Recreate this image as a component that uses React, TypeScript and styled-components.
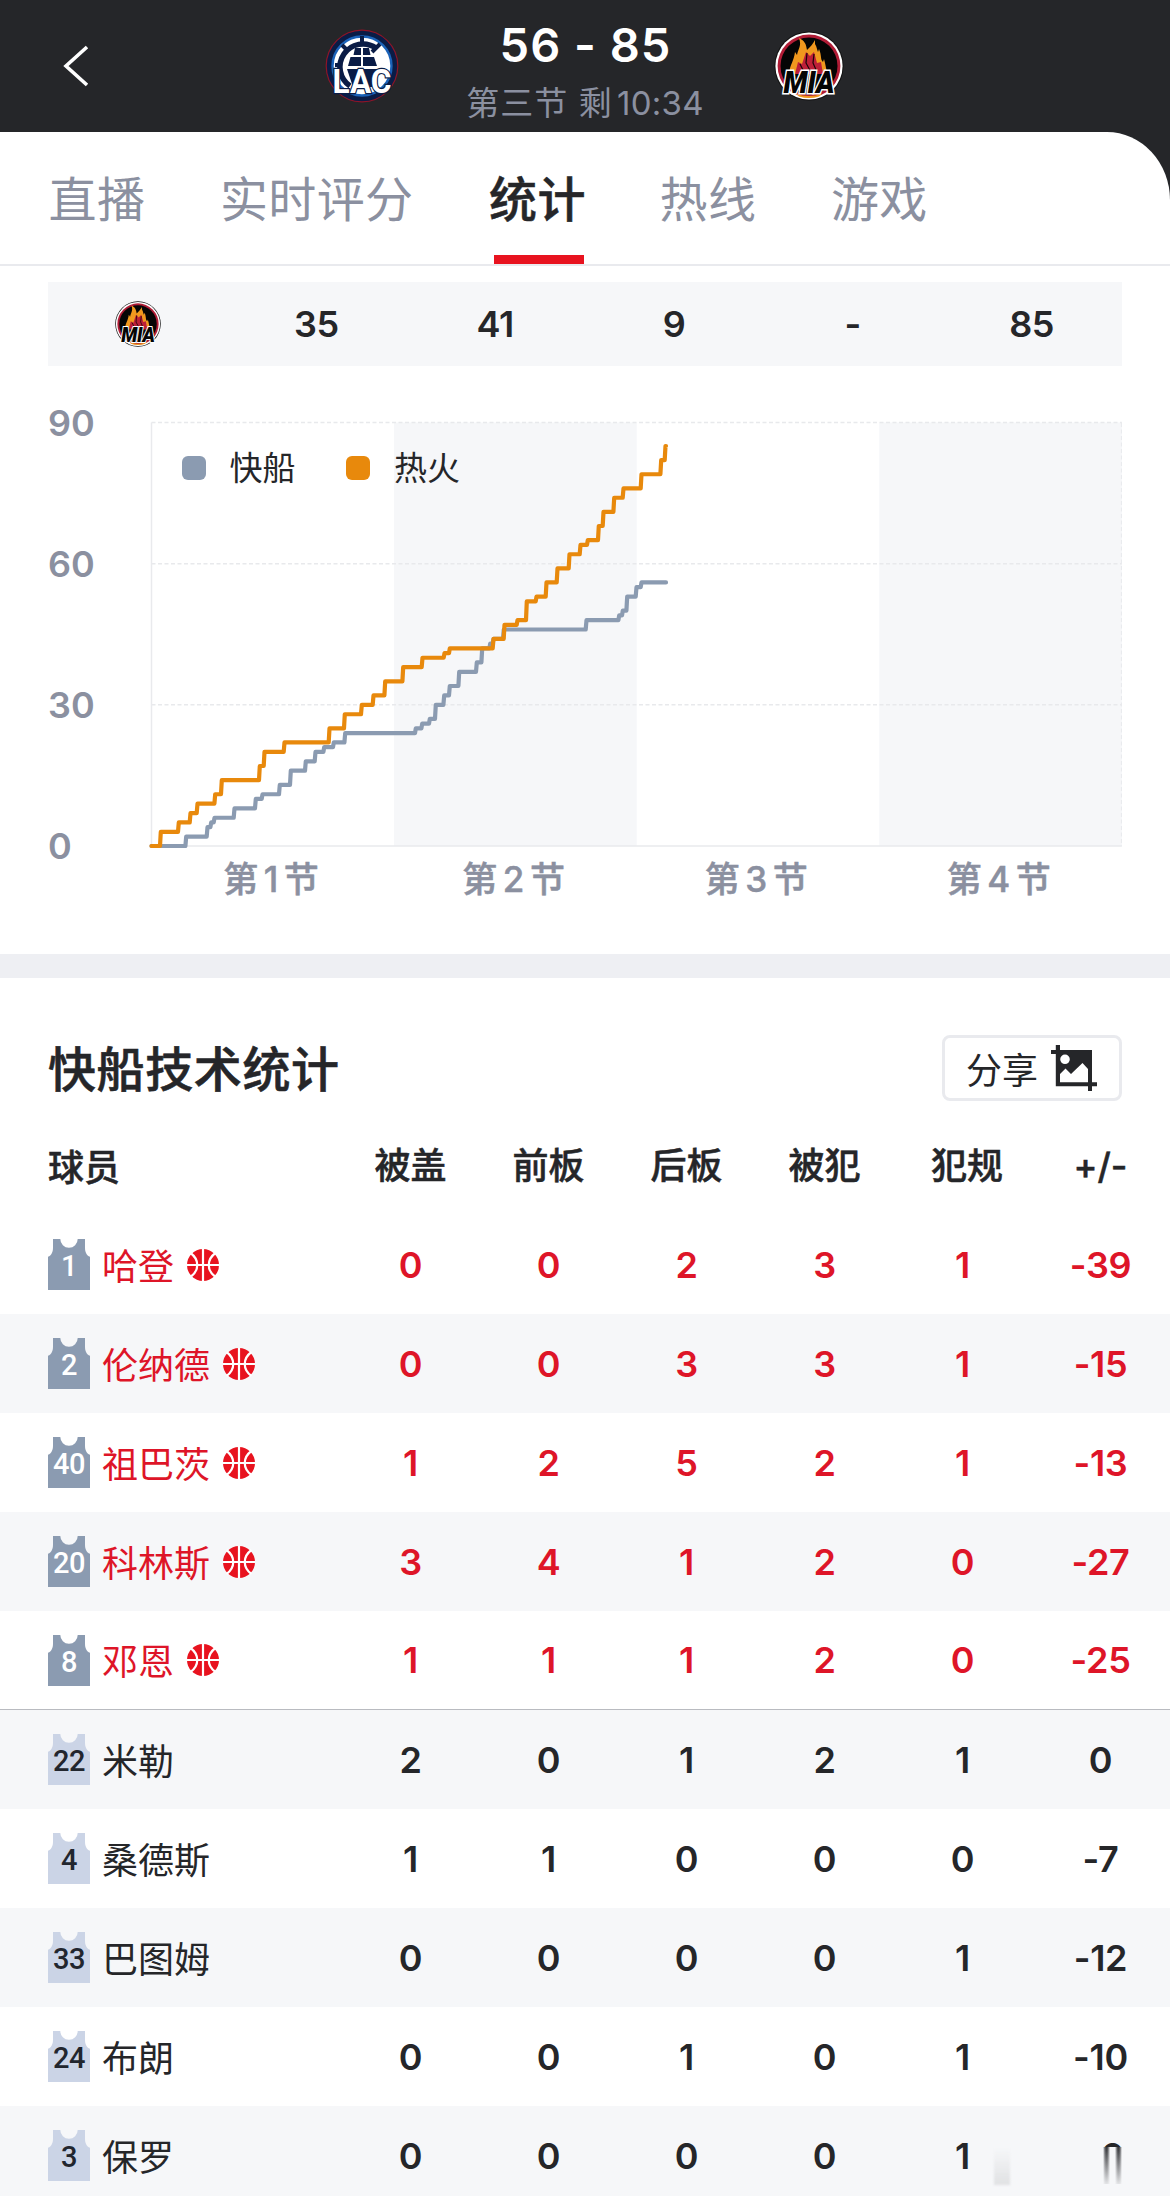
import React from "react";
import styled, { createGlobalStyle, css, ThemeProvider } from "styled-components";

const theme = {
  dark: "#252629",
  muted: "#8b90a0",
  red: "#e8131f",
  redText: "#de1528",
  stripe: "#f6f7f9",
  line: "#e9eaee",
  clippers: "#8b9bb1",
  heat: "#e8890c"
};

type StyledTheme = typeof theme;

const t = (key: keyof StyledTheme) => (props: { theme: any }) =>
  props.theme[key];

const GlobalStyle = createGlobalStyle`
  * {
    box-sizing: border-box;
  }

  body {
    margin: 0;
    background: #fff;
    font-family: Inter, "Noto Sans CJK SC", sans-serif;
    color: #252629;
  }
`;

/* ---------- data ---------- */

type Point = [number, number];

type Player = {
  number: number;
  name: string;
  stats: string[];
  isOnCourt?: boolean;
};

const tabs = ["直播", "实时评分", "统计", "热线", "游戏"];

const quarterScores = ["35", "41", "9", "-", "85"];

const quarters = ["第1节", "第2节", "第3节", "第4节"];

const columns = ["被盖", "前板", "后板", "被犯", "犯规", "+/-"];

const players: Player[] = [
  { number: 1, name: "哈登", stats: ["0", "0", "2", "3", "1", "-39"], isOnCourt: true },
  { number: 2, name: "伦纳德", stats: ["0", "0", "3", "3", "1", "-15"], isOnCourt: true },
  { number: 40, name: "祖巴茨", stats: ["1", "2", "5", "2", "1", "-13"], isOnCourt: true },
  { number: 20, name: "科林斯", stats: ["3", "4", "1", "2", "0", "-27"], isOnCourt: true },
  { number: 8, name: "邓恩", stats: ["1", "1", "1", "2", "0", "-25"], isOnCourt: true },
  { number: 22, name: "米勒", stats: ["2", "0", "1", "2", "1", "0"] },
  { number: 4, name: "桑德斯", stats: ["1", "1", "0", "0", "0", "-7"] },
  { number: 33, name: "巴图姆", stats: ["0", "0", "0", "0", "1", "-12"] },
  { number: 24, name: "布朗", stats: ["0", "0", "1", "0", "1", "-10"] },
  { number: 3, name: "保罗", stats: ["0", "0", "0", "0", "1", "0"] }
];

// [x offset, score from that point on]
const heatPoints: Point[] = [
  [0, 0], [9.3, 3], [27.3, 5], [39, 7], [46, 9], [63.7, 11], [70.3, 14],
  [108.3, 17], [113, 20], [133, 22], [178, 25], [193.3, 28], [210.3, 30],
  [222, 32], [233.7, 35], [251.7, 38], [271, 40], [293, 41], [298.3, 42],
  [342, 44], [353, 47], [366, 48], [375.3, 52], [385, 53], [395, 56],
  [406, 59], [418, 62], [429, 64], [436.3, 65], [447.3, 68], [452, 71],
  [462.7, 74], [472, 76], [490, 79], [509.7, 82], [514, 85]
];

const clippersPoints: Point[] = [
  [0, 0], [34.7, 2], [56, 4], [59.7, 5], [63, 6], [83, 8], [104.3, 10],
  [111, 11], [128.3, 13], [139.3, 16], [154.3, 18], [164, 20], [172.7, 21],
  [182.3, 22], [193.7, 24], [264.3, 25], [270.7, 26], [278.3, 27],
  [284.3, 30], [292.7, 32], [298.3, 34], [307.7, 37], [325.3, 39],
  [330.7, 42], [338.7, 43], [342, 44], [352.3, 46], [435, 48], [467.7, 49],
  [471.3, 50], [475.7, 53], [485, 55], [490, 56]
];

/* ---------- header ---------- */

const Page = styled.div`
  position: relative;
  width: 1170px;
  height: 2196px;
  overflow: hidden;
  background: ${t("dark")};
`;

const Header = styled.header`
  display: grid;
  grid-template-columns: 310px 103px 344px 103px 1fr;
  align-items: center;
  justify-items: center;
  height: 132px;
  color: #fff;
`;

const BackButton = styled.button`
  justify-self: start;
  display: flex;
  margin-left: 60px;
  padding: 0;
  border: none;
  background: transparent;
`;

const ScoreBox = styled.div`
  display: flex;
  flex-direction: column;
  align-items: center;
  align-self: start;
  padding-top: 16px;
`;

const Score = styled.div`
  padding-left: 1px;
  font-size: 47px;
  font-weight: 600;
  line-height: 58px;
  letter-spacing: 1px;
  white-space: nowrap;
`;

const Clock = styled.div`
  padding-top: 6px;
  color: ${t("muted")};
  font-size: 33px;
  line-height: 46px;
  letter-spacing: 1.1px;
  white-space: nowrap;
`;

const ClockTime = styled.span`
  margin-left: 4px;
  letter-spacing: 0.3px;
`;

const Content = styled.main`
  height: 2064px;
  background: #fff;
  border-top-right-radius: 63px 68px;
`;

const Tabs = styled.nav`
  display: flex;
  gap: 74.6px;
  height: 134px;
  padding-left: 48.5px;
  border-bottom: 2px solid ${t("line")};
`;

const Tab = styled.a<{ isActive: boolean }>`
  position: relative;
  height: 132px;
  color: ${props => (props.isActive ? props.theme.dark : props.theme.muted)};
  font-size: 48px;
  font-weight: ${props => (props.isActive ? 500 : 400)};
  line-height: 135px;
  letter-spacing: 0.4px;

  ${props =>
    props.isActive &&
    css`
      margin: 0 -1px 0 1px;
      -webkit-text-stroke: 0.5px;

      &:after {
        content: "";
        position: absolute;
        left: 5px;
        bottom: 0;
        width: 90px;
        height: 9px;
        background: ${t("red")};
      }
    `}
`;

/* ---------- score by quarter ---------- */

const QuarterRow = styled.div`
  display: grid;
  grid-template-columns: 179px repeat(5, 178.8px);
  align-items: center;
  justify-items: center;
  height: 84px;
  margin: 16px 48px 0;
  background: ${t("stripe")};
  font-size: 36px;
  font-weight: 600;
  letter-spacing: -0.4px;
`;

/* ---------- chart ---------- */

const ChartSection = styled.section`
  display: flex;
  height: 612px;
  padding: 38px 0 0 48px;
  border-bottom: 24px solid #eeeff3;
`;

const Axis = styled.div`
  display: flex;
  flex-direction: column;
  width: 98px;
  gap: 103px;
  color: ${t("muted")};
  font-size: 36px;
  font-weight: 600;
  line-height: 38px;
`;

const Plot = styled.div`
  position: relative;
  width: 982px;
  margin-top: 15px;
`;

const PlotSvg = styled.svg`
  display: block;
`;

const QuarterLabels = styled.div`
  display: grid;
  grid-template-columns: repeat(4, 242.6px);
  padding: 4px 0 0 6.5px;
  color: ${t("muted")};
  font-size: 35px;
  font-weight: 500;
  line-height: 48px;
  letter-spacing: 5.5px;
  text-align: center;
  -webkit-text-stroke: 0.5px;
`;

const Legend = styled.div`
  position: absolute;
  top: 27px;
  left: 35.5px;
  display: flex;
  gap: 50.5px;
`;

const LegendItem = styled.span<{ color: "clippers" | "heat" }>`
  display: flex;
  align-items: center;
  gap: 24px;
  font-size: 33px;
  line-height: 44px;

  &:before {
    content: "";
    width: 24px;
    height: 24px;
    border-radius: 6px;
    background: ${props => props.theme[props.color]};
  }
`;

/* ---------- player stats ---------- */

const SectionHead = styled.div`
  display: flex;
  align-items: center;
  justify-content: space-between;
  height: 162px;
  padding: 18px 48px 0;
`;

const Title = styled.h2`
  margin: 3px 0 0;
  font-size: 48px;
  font-weight: 500;
  line-height: 60px;
  letter-spacing: 0.6px;
  -webkit-text-stroke: 0.6px;
`;

const ShareButton = styled.button`
  display: flex;
  align-items: center;
  gap: 13px;
  width: 180px;
  height: 66px;
  padding: 0 0 0 21px;
  border: 3px solid ${t("line")};
  border-radius: 8px;
  background: #fff;
  color: ${t("dark")};
  font-family: inherit;
  font-size: 36px;
`;

const rowGrid = css`
  display: grid;
  grid-template-columns: 341.5px repeat(6, 138px);
`;

const HeadRow = styled.div`
  ${rowGrid}
  height: 75px;
  font-size: 36px;
  font-weight: 500;
  -webkit-text-stroke: 0.5px;
`;

const HeadCell = styled.span<{ nudge?: number }>`
  padding-left: ${props => props.nudge || 0}px;
  text-align: center;
  line-height: 52px;

  &:first-child {
    padding: 2px 0 0 48px;
    text-align: left;
  }
`;

const StatCell = styled.span`
  font-size: 36px;
  font-weight: 600;
  letter-spacing: -0.3px;
  text-align: center;
`;

const PlayerRow = styled.div<{ isOnCourt?: boolean; isLastOnCourt?: boolean }>`
  ${rowGrid}
  align-items: center;
  height: 99px;
  color: ${props => (props.isOnCourt ? props.theme.redText : props.theme.dark)};
  border-bottom: ${props => (props.isLastOnCourt ? "1px solid #b9bbc0" : "none")};

  &:nth-child(even) {
    background: ${t("stripe")};
  }

  &:last-child ${StatCell}:last-child {
    padding-left: 24px;
  }
`;

const PlayerCell = styled.span`
  display: flex;
  align-items: center;
  padding-left: 48px;
`;

const PlayerName = styled.span`
  margin: 4px 13px 0 12px;
  font-size: 36px;
  line-height: 50px;
`;

const Smudge = styled.div`
  position: absolute;
  right: 14px;
  bottom: 12px;
  width: 164px;
  height: 37px;
  background: linear-gradient(
      to bottom,
      rgba(246, 247, 249, 0),
      rgba(246, 247, 249, 0.9)
    ),
    linear-gradient(
      to right,
      transparent 111px,
      #55565a 113px,
      #2b2c2f 115px,
      #a0a1a4 117px,
      transparent 118px,
      transparent 123px,
      #a0a1a4 124px,
      #2b2c2f 126px,
      #55565a 128px,
      transparent 130px
    ),
    ${t("stripe")};

  &:before {
    content: "";
    position: absolute;
    left: 2px;
    bottom: -1px;
    width: 16px;
    height: 36px;
    background: linear-gradient(to bottom, transparent, #e0e1e3);
    filter: blur(1px);
  }
`;

/* ---------- drawings ---------- */

const ClippersLogo = () => (
  <svg width="74" height="74" viewBox="-37 -37 74 74">
    <circle r="35.8" fill="#0a1c46" stroke="#8c1428" strokeWidth="1.2" />
    <circle r="29.5" fill="#fff" stroke="#1b62b8" strokeWidth="2.4" />
    <path
      d="M14 -18 A22.500 22.500 0 1 0 -12 20"
      fill="none"
      stroke="#0a1c46"
      strokeWidth="5.500"
    />
    <path
      d="M0 -30v6M-20 -21l5 5M-27 -1h4M10 -14l8 -8"
      stroke="#0a1c46"
      strokeWidth="4"
    />
    <path
      d="M-7 -18h6v7h-7.500zM1 -18h6l1.500 7h-7.500zM-14 0l2.500-9h10.500v9zM1 -9h11l3 9h-14zM-15 3h32l-6 18h-20z"
      fill="#0a1c46"
    />
    <text
      x="0"
      y="27"
      textAnchor="middle"
      textLength="59"
      lengthAdjust="spacingAndGlyphs"
      fontFamily="Roboto, sans-serif"
      fontWeight="700"
      fontSize="34"
      fill="#fff"
      stroke="#0a1c46"
      strokeWidth="2.400"
      paintOrder="stroke"
    >
      LAC
    </text>
  </svg>
);

const HeatLogo = ({ size }: { size: number }) => (
  <svg width={size} height={size} viewBox="-35 -35 70 70">
    <circle r="34.600" fill="#111" />
    <circle r="33.600" fill="#fff" />
    <circle r="31.400" fill="#b01c36" />
    <circle r="28.500" fill="#050505" />
    <path
      d="M-20 8 C-19 -2 -15 -5 -14 -14 L-12 -11 C-11 -17 -7 -20 -10 -28 C-4 -25 -3 -22 -2 -16 C1 -19 4 -22 6 -26 L6 -22 C8 -19 8 -16 9 -14 L10 -17 C13 -10 11 -7 14 -4 L15 -7 C17 0 17 4 19 8 Z"
      fill="#f0981e"
    />
    <path
      d="M-14 8 L-11 -4 L-7 -2 L-3 -14 L1 -10 L5 -14 L8 -3 L12 -4 L14 8 Z"
      fill="#bd1f38"
    />
    <path
      d="M-9 -2 L-4 8 M-2 -13 L-3 -3 L3 8 M5 -12 L4 -3 L8 6"
      fill="none"
      stroke="#1a0508"
      strokeWidth="1.2"
    />
    <path d="M-13 27.500q13 5 26 0l-3 3q-10 3 -20 0z" fill="#f0981e" />
    <text
      x="0"
      y="27"
      textAnchor="middle"
      textLength="51"
      lengthAdjust="spacingAndGlyphs"
      fontFamily="Roboto, sans-serif"
      fontWeight="900"
      fontStyle="italic"
      fontSize="31"
      fill="#050505"
      stroke="#fff"
      strokeWidth="3"
      paintOrder="stroke"
    >
      MIA
    </text>
  </svg>
);

const Jersey = ({ number, isOnCourt }: { number: number; isOnCourt?: boolean }) => (
  <svg width="42" height="51" viewBox="0 0 42 51">
    <path
      d="M5 0H12.300A8.700 8.700 0 0 0 29.700 0H37V8.500C37 13 38.500 16.500 42 17.800V51H0V17.800C3.500 16.500 5 13 5 8.500Z"
      fill={isOnCourt ? theme.clippers : "#cbd4e6"}
    />
    <text
      x="21"
      y="36.800"
      textAnchor="middle"
      fontFamily="Roboto, sans-serif"
      fontWeight="500"
      fontSize="29"
      letterSpacing="-0.600"
      fill={isOnCourt ? "#fff" : "#22262e"}
    >
      {number}
    </text>
  </svg>
);

const Ball = () => (
  <svg width="32" height="32" viewBox="-16 -16 32 32">
    <circle r="16" fill={theme.red} />
    <path
      d="M0 -16V16M-16 0H16M-12.500 -12C-3.500 -5.500 -3.500 5.500 -12.500 12M12.500 -12C3.500 -5.500 3.500 5.500 12.500 12"
      fill="none"
      stroke="#fff"
      strokeWidth="2.200"
    />
  </svg>
);

const PictureIcon = () => (
  <svg width="46" height="46" viewBox="0 0 46 46">
    <path
      fill="#252629"
      fillRule="evenodd"
      d="M4.800 0H9V5H41V37.300H46V41.300H41V46H37V41.300H4.800V9H0V5H4.800ZM9 37.300H37V24L31.500 18L20 29L14.500 23.500L9 29ZM14 9.500A4.800 4.800 0 1 0 14 19.100A4.800 4.800 0 1 0 14 9.500Z"
    />
  </svg>
);

const ORIGIN_X = 5.5;
const ORIGIN_Y = 427;
const POINT_HEIGHT = 4.706;
const QUARTER_WIDTH = 242.6;
const LAST_X = 515;

const toStepPath = (points: Point[]) =>
  points
    .map(([x, score], idx) => {
      const y = ORIGIN_Y - score * POINT_HEIGHT;
      return idx === 0
        ? `M${ORIGIN_X + x} ${y}`
        : `H${ORIGIN_X + x - 0.8} L${ORIGIN_X + x} ${y}`;
    })
    .join(" ") + ` H${ORIGIN_X + LAST_X - 0.5}`;

const ScoreChart = () => (
  <PlotSvg width="982" height="432" viewBox="0 0 982 432">
    {[1, 3].map(idx => (
      <rect
        key={idx}
        x={ORIGIN_X + QUARTER_WIDTH * idx}
        y={ORIGIN_Y - 90 * POINT_HEIGHT}
        width={QUARTER_WIDTH}
        height={90 * POINT_HEIGHT}
        fill={theme.stripe}
      />
    ))}
    {[30, 60, 90].map(score => (
      <path
        key={score}
        d={`M${ORIGIN_X} ${ORIGIN_Y - score * POINT_HEIGHT}h${QUARTER_WIDTH * 4}`}
        stroke="#e8e9ec"
        strokeWidth="1.5"
        strokeDasharray="4 2.500"
      />
    ))}
    <path
      d={`M${ORIGIN_X + QUARTER_WIDTH * 4 - 0.5} 4V427`}
      stroke="#e8e9ec"
      strokeDasharray="4 2.500"
    />
    <path
      d={`M${ORIGIN_X} 3.500V${ORIGIN_Y}h${QUARTER_WIDTH * 4}`}
      fill="none"
      stroke="#e9eaed"
      strokeWidth="1.5"
    />
    {[
      { points: clippersPoints, color: theme.clippers },
      { points: heatPoints, color: theme.heat }
    ].map(({ points, color }) => (
      <path
        key={color}
        d={toStepPath(points)}
        fill="none"
        stroke={color}
        strokeWidth="4.2"
        strokeLinecap="round"
        strokeLinejoin="round"
      />
    ))}
  </PlotSvg>
);

const App = () => (
  <ThemeProvider theme={theme}>
    <GlobalStyle />
    <Page>
      <Header>
        <BackButton>
          <svg width="32" height="44" viewBox="0 0 32 44">
            <path
              d="M27 3L6 22L27 41"
              fill="none"
              stroke="#fff"
              strokeWidth="3.600"
            />
          </svg>
        </BackButton>
        <ClippersLogo />
        <ScoreBox>
          <Score>56 - 85</Score>
          <Clock>
            第三节 剩<ClockTime>10:34</ClockTime>
          </Clock>
        </ScoreBox>
        <HeatLogo size={70} />
      </Header>
      <Content>
        <Tabs>
          {tabs.map(tab => (
            <Tab key={tab} isActive={tab === "统计"}>
              {tab}
            </Tab>
          ))}
        </Tabs>
        <QuarterRow>
          <HeatLogo size={46} />
          {quarterScores.map((score, idx) => (
            <span key={idx}>{score}</span>
          ))}
        </QuarterRow>
        <ChartSection>
          <Axis>
            {[90, 60, 30, 0].map(score => (
              <span key={score}>{score}</span>
            ))}
          </Axis>
          <Plot>
            <Legend>
              <LegendItem color="clippers">快船</LegendItem>
              <LegendItem color="heat">热火</LegendItem>
            </Legend>
            <ScoreChart />
            <QuarterLabels>
              {quarters.map(quarter => (
                <span key={quarter}>{quarter}</span>
              ))}
            </QuarterLabels>
          </Plot>
        </ChartSection>
        <SectionHead>
          <Title>快船技术统计</Title>
          <ShareButton>
            分享
            <PictureIcon />
          </ShareButton>
        </SectionHead>
        <HeadRow>
          <HeadCell>球员</HeadCell>
          {columns.map(column => (
            <HeadCell key={column} nudge={column === "犯规" ? 9 : 0}>
              {column}
            </HeadCell>
          ))}
        </HeadRow>
        <div>
          {players.map(({ number, name, stats, isOnCourt }, idx) => (
            <PlayerRow
              key={number}
              isOnCourt={isOnCourt}
              isLastOnCourt={isOnCourt && !players[idx + 1].isOnCourt}
            >
              <PlayerCell>
                <Jersey number={number} isOnCourt={isOnCourt} />
                <PlayerName>{name}</PlayerName>
                {isOnCourt && <Ball />}
              </PlayerCell>
              {stats.map((stat, statIdx) => (
                <StatCell key={statIdx}>{stat}</StatCell>
              ))}
            </PlayerRow>
          ))}
        </div>
      </Content>
      <Smudge />
    </Page>
  </ThemeProvider>
);

export default App;
